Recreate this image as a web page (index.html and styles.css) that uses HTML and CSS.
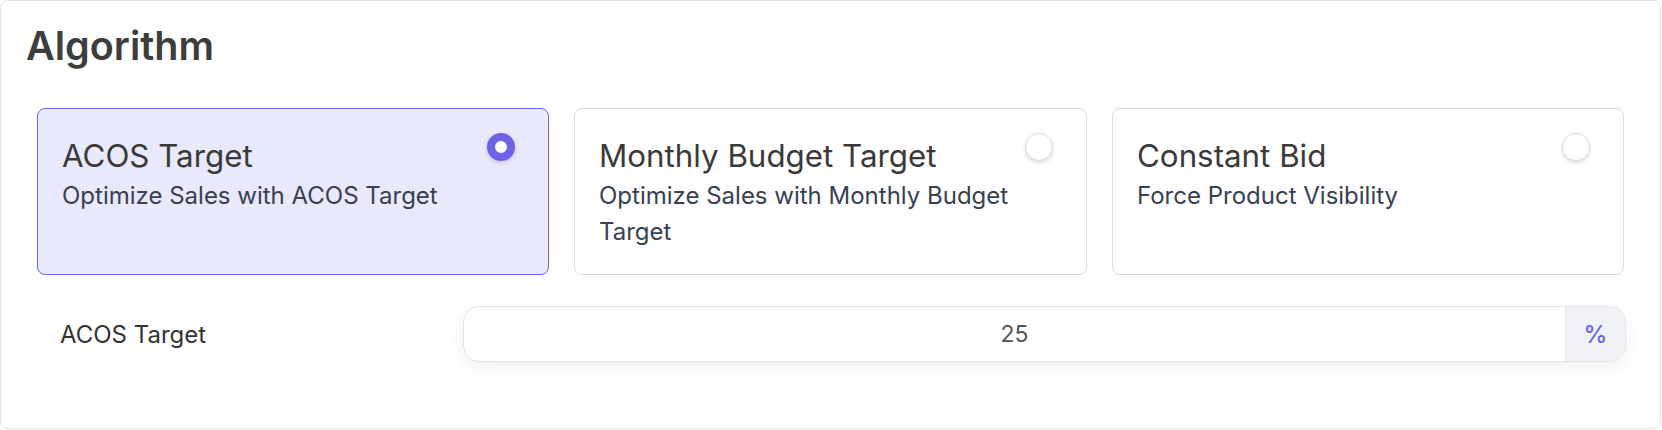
FILE: index.html
```html
<!DOCTYPE html>
<html lang="en">
<head>
<meta charset="utf-8">
<title>Algorithm</title>
<link rel="stylesheet" href="styles.css">
</head>
<body>
<section class="panel">
  <h1 class="panel-title">Algorithm</h1>
  <div class="options">
    <label class="option option-active">
      <span class="radio radio-checked"></span>
      <span class="option-title">ACOS Target</span>
      <span class="option-desc">Optimize Sales with ACOS Target</span>
    </label>
    <label class="option">
      <span class="radio"></span>
      <span class="option-title">Monthly Budget Target</span>
      <span class="option-desc">Optimize Sales with Monthly Budget Target</span>
    </label>
    <label class="option">
      <span class="radio"></span>
      <span class="option-title">Constant Bid</span>
      <span class="option-desc">Force Product Visibility</span>
    </label>
  </div>
  <div class="field-row">
    <span class="field-label">ACOS Target</span>
    <div class="input-group">
      <span class="input-value">25</span>
      <span class="input-suffix">%</span>
    </div>
  </div>
</section>
</body>
</html>
```

FILE: styles.css
```css
* { box-sizing: border-box; }

html, body {
  margin: 0;
  padding: 0;
  background: #ffffff;
}

body {
  font-family: Inter, "Noto Sans", "Liberation Sans", sans-serif;
  width: 1662px;
  height: 430px;
  overflow: hidden;
}

.panel {
  width: 1661px;
  height: 429px;
  border: 1px solid #e4e4e4;
  border-radius: 8px;
  padding: 20px 36px 0 36px;
  background: #fff;
}

.panel-title {
  margin: 0 0 0 -11px;
  font-size: 39.5px;
  line-height: 51px;
  font-weight: 600;
  color: #3d3d3d;
}

.options {
  margin-top: 36px;
  display: grid;
  grid-template-columns: 512px 513px 512px;
  column-gap: 25px;
}

.option {
  position: relative;
  display: flex;
  flex-direction: column;
  height: 167px;
  padding: 27px 60px 25px 24px;
  border: 1px solid #dcdcdc;
  border-radius: 8px;
  background: #ffffff;
}

.option-active {
  background: #e8e9fb;
  border-color: #6c63e6;
}

.option-title {
  font-size: 31.3px;
  line-height: 40px;
  color: #3a3a3a;
  margin-bottom: 2px;
}

.option-desc {
  font-size: 24px;
  line-height: 36px;
  color: #374151;
  margin-right: -36px;
}

.radio {
  position: absolute;
  top: 24px;
  right: 33px;
  width: 28px;
  height: 28px;
  border-radius: 50%;
  background: #ffffff;
  border: 1px solid #dedede;
  box-shadow: 0 2px 4px rgba(0, 0, 0, 0.14);
}

.radio-checked {
  border: 8px solid #6c63e6;
  background: #ffffff;
  box-shadow: 0 2px 4px rgba(70, 60, 180, 0.2);
}

.field-row {
  margin-top: 31px;
  display: flex;
  align-items: center;
}

.field-label {
  width: 426px;
  padding-left: 23px;
  font-size: 24px;
  color: #333333;
}

.input-group {
  flex: 1;
  display: flex;
  height: 56px;
  margin-right: -2px;
  border: 1px solid #e3e5e8;
  border-radius: 16px;
  overflow: hidden;
  box-shadow: 0 6px 18px rgba(0, 0, 0, 0.06);
  background: #ffffff;
}

.input-value {
  flex: 1;
  display: flex;
  align-items: center;
  justify-content: center;
  font-size: 23px;
  color: #555555;
}

.input-suffix {
  width: 60px;
  display: flex;
  align-items: center;
  justify-content: center;
  background: #f1f2f6;
  border-left: 1px solid #e3e5e8;
  color: #6c63e6;
  font-size: 24px;
  font-weight: 500;
}
```
